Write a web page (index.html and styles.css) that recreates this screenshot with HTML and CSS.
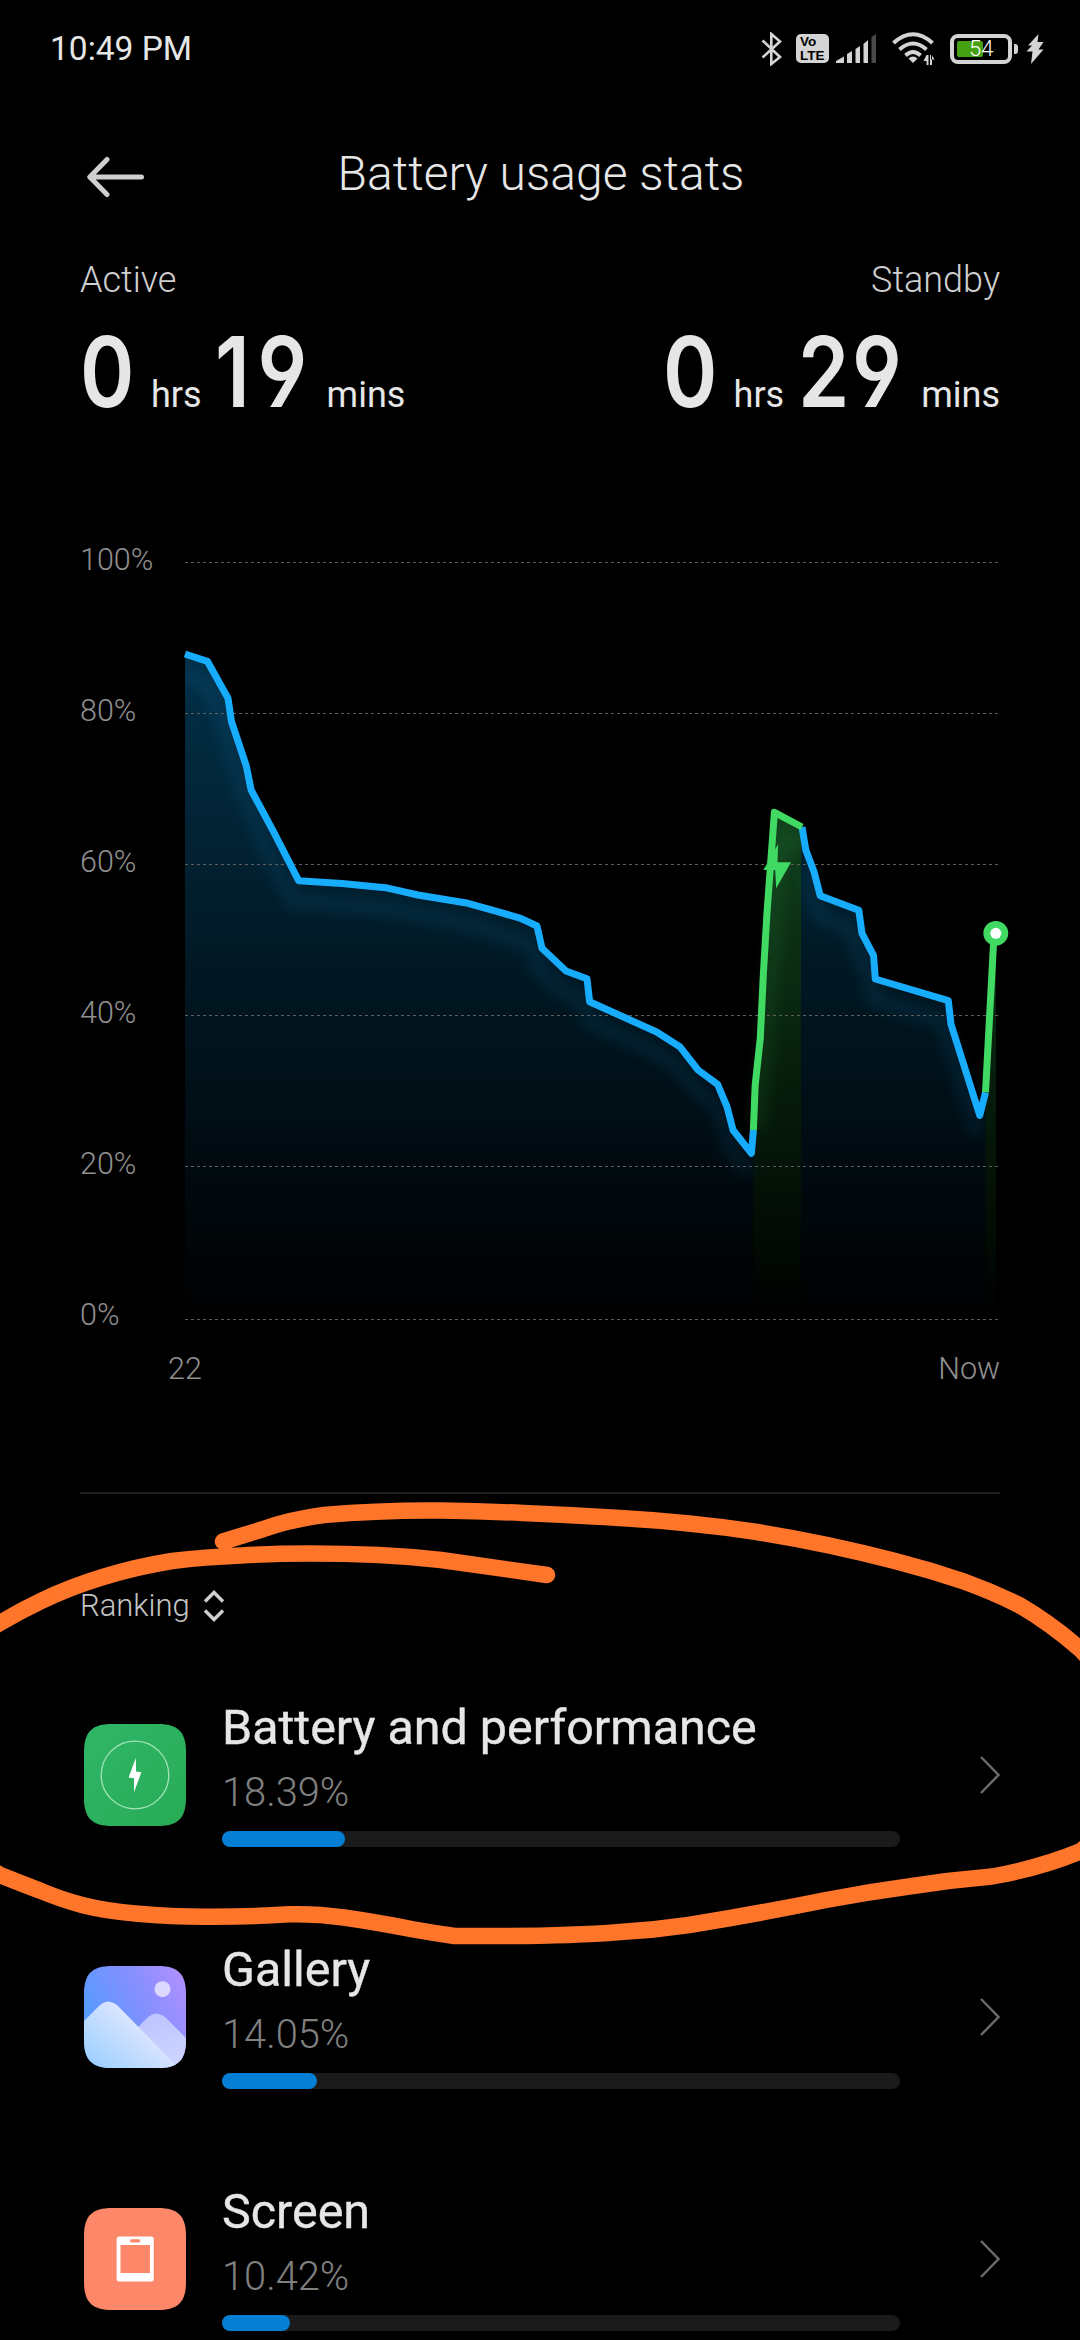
FILE: index.html
```html
<!DOCTYPE html>
<html lang="en">

<head>
    <meta charset="utf-8">
    <title>Battery usage stats</title>
    <link rel="stylesheet" href="styles.css">
</head>

<body>
    <div class="screen">
        <div class="status-bar">
            <span class="time">10:49 PM</span>
            <div class="status-icons">
                <svg class="bluetooth" width="21" height="34" viewBox="0 0 21 34">
                    <path d="M1.5 8.5 L19 25 L10.3 32 V2 L19 9.5 L1.5 25.5" />
                </svg>
                <div class="volte"><span>Vo</span><span>LTE</span></div>
                <svg class="signal" width="41" height="30" viewBox="0 0 41 30">
                    <path d="M0 29 V27 L8 22.5 V29 Z M11 29 V20 L16 17 V29 Z M19.500 29 V15 L24 12 V29 Z M27.500 29 V10 L32 6 V29 Z" />
                    <path class="off" d="M35.500 29 V3 L40 0 V29 Z" />
                </svg>
                <svg class="wifi" width="43" height="34" viewBox="0 0 43 34">
                    <path class="arc" d="M1.500 11 Q21 -6.500 40.500 11 M7.500 17.500 Q21 5.500 34.500 17.500 M13.500 23.500 Q21 16.500 28.500 23.500" />
                    <path d="M16.500 26.500 Q21 22.500 25.500 26.500 L21 31 Z" />
                    <path d="M34.500 23 h2 v10 h-2 v-4 h-3 Z M38 33 v-10 l1 0 v4.500 h3.500 l-2.500 -4 v9.500 Z" />
                </svg>
                <div class="battery">
                    <div class="battery-fill"></div>
                    <span class="battery-level">54</span>
                </div>
                <div class="battery-nub"></div>
                <svg class="charge" width="18" height="30" viewBox="0 0 18 30">
                    <path d="M12.500 0 L2 11.500 H6 L0.500 17.500 H6.500 L5 30 L17.500 15.500 H12.500 L17.500 8 H11.500 Z" />
                </svg>
            </div>
        </div>

        <div class="header">
            <svg class="back" width="58" height="42" viewBox="0 0 58 42">
                <path d="M54.500 21 H3 M20 3.500 L2.800 21 L20 38.500" />
            </svg>
            <h1>Battery usage stats</h1>
        </div>

        <div class="summary">
            <div class="stat">
                <div class="stat-label">Active</div>
                <div class="stat-value">
                    <span class="num hours">0</span><span class="unit">hrs</span><span class="num active-mins">19</span><span class="unit">mins</span>
                </div>
            </div>
            <div class="stat stat-right">
                <div class="stat-label">Standby</div>
                <div class="stat-value">
                    <span class="num hours">0</span><span class="unit">hrs</span><span class="num standby-mins">29</span><span class="unit">mins</span>
                </div>
            </div>
        </div>

        <div class="chart">
            <div class="y-axis">
                <span>100%</span>
                <span>80%</span>
                <span>60%</span>
                <span>40%</span>
                <span>20%</span>
                <span>0%</span>
            </div>
            <svg class="plot" width="815" height="790" viewBox="185 540 815 790">
                <defs>
                    <linearGradient id="blueFill" gradientUnits="userSpaceOnUse" x1="0" y1="650" x2="0" y2="1318">
                        <stop offset="0" stop-color="#033049" />
                        <stop offset="0.5" stop-color="#011722" />
                        <stop offset="1" stop-color="#000001" />
                    </linearGradient>
                    <linearGradient id="greenFill" gradientUnits="userSpaceOnUse" x1="0" y1="812" x2="0" y2="1318">
                        <stop offset="0" stop-color="#113f1c" />
                        <stop offset="0.5" stop-color="#071f0c" />
                        <stop offset="1" stop-color="#000100" />
                    </linearGradient>
                    <filter id="glow" filterUnits="userSpaceOnUse" x="150" y="600" width="900" height="720">
                        <feGaussianBlur stdDeviation="7" />
                    </filter>
                    <clipPath id="plotClip">
                        <rect x="185" y="540" width="811" height="790" />
                    </clipPath>
                </defs>

                <path fill="url(#blueFill)" d="M185 654 L207.400 661.300 L228 698.300 L231.500 721.700 L246.300 766 L251.100 790 L273.500 831.700 L298.600 880.700 L342 883.600 L385.400 887.700 L418 895 L468 903.300 L494 910.700 L520.700 918.300 L537 926 L542 948.300 L566 971 L587 978.700 L589.600 1001.700 L656.700 1032 L679.800 1046.700 L698 1070 L717.600 1084.300 L727 1106.700 L733 1130 L751.400 1153.300 L753.400 1130 V1318 H185 Z" />
                <path fill="url(#blueFill)" d="M801 827 L805.800 850 L814 871.700 L820.200 895.700 L858.800 910.300 L862 933.300 L873.600 955.700 L875.300 979 L948.300 1000.700 L951 1024.300 L979.700 1115.300 L985.500 1092.300 V1318 H801 Z" />
                <path fill="url(#greenFill)" d="M753.400 1130 L755.200 1085 L760.300 1038 L763.400 973.300 L774.400 812.300 L801 827 V1318 H753.400 Z" />
                <path fill="url(#greenFill)" d="M985.500 1092.300 L996 933.300 V1318 H985.500 Z" />

                <g clip-path="url(#plotClip)">
                    <path class="shade blue" filter="url(#glow)" d="M185 674 L205 683 L222 718 L240 786 L268 852 L293 901 L385 908 L468 924 L530 944 L540 970 L562 991 L584 1000 L590 1022 L655 1052 L678 1067 L696 1090 L715 1105 L725 1127 L731 1150 L750 1172" />
                    <path class="shade blue" filter="url(#glow)" d="M806 872 L818 916 L853 930 L860 955 L870 977 L874 1000 L943 1021 L950 1044 L978 1134" />
                    <path class="shade green" filter="url(#glow)" d="M757 1130 L766 1038 L781 834 L801 846" />
                </g>

                <g class="grid">
                    <path d="M185 562.500 H999" />
                    <path d="M185 713.500 H999" />
                    <path d="M185 864.500 H999" />
                    <path d="M185 1015.500 H999" />
                    <path d="M185 1166.500 H999" />
                    <path d="M185 1319.500 H999" />
                </g>

                <path class="line blue" d="M185 654 L207.400 661.300 L228 698.300 L231.500 721.700 L246.300 766 L251.100 790 L273.500 831.700 L298.600 880.700 L342 883.600 L385.400 887.700 L418 895 L468 903.300 L494 910.700 L520.700 918.300 L537 926 L542 948.300 L566 971 L587 978.700 L589.600 1001.700 L656.700 1032 L679.800 1046.700 L698 1070 L717.600 1084.300 L727 1106.700 L733 1130 L751.400 1153.300 L753.400 1130" />
                <path class="line blue" d="M802 827 L805.800 850 L814 871.700 L820.200 895.700 L858.800 910.300 L862 933.300 L873.600 955.700 L875.300 979 L948.300 1000.700 L951 1024.300 L979.700 1115.300 L985.500 1092.300" />
                <path class="line green" d="M753.400 1130 L755.200 1085 L760.300 1038 L763.400 973.300 L767 913 L774.400 812.300 L802 827" />
                <path class="line green" d="M985.500 1092.300 L993.500 944" />
                <path class="bolt" d="M778.200 844 L777.500 862.300 H791 L776.200 888.300 L775.200 870 H763.400 Z" />
                <circle class="now-ring" cx="995.800" cy="933.300" r="12.400" />
                <circle class="now-dot" cx="995.800" cy="933.300" r="5.500" />
            </svg>
        </div>
        <div class="x-axis">
            <span>22</span>
            <span>Now</span>
        </div>

        <div class="divider"></div>

        <div class="ranking">
            <span>Ranking</span>
            <svg width="22" height="32" viewBox="0 0 22 32">
                <path d="M2 11.500 L11 2.500 L20 11.500 M2 20.500 L11 29.500 L20 20.500" />
            </svg>
        </div>

        <div class="app-list">
            <div class="app">
                <svg class="app-icon" width="102" height="102" viewBox="0 0 102 102">
                    <defs>
                        <linearGradient id="batteryBg" x1="0" y1="0" x2="1" y2="1">
                            <stop offset="0" stop-color="#30b668" />
                            <stop offset="1" stop-color="#28ab55" />
                        </linearGradient>
                    </defs>
                    <path fill="url(#batteryBg)" d="M28 0 H74 C94 0 102 8 102 28 V74 C102 94 94 102 74 102 H28 C8 102 0 94 0 74 V28 C0 8 8 0 28 0 Z" />
                    <circle cx="51" cy="51" r="33.800" fill="none" stroke="#a4e5ba" stroke-width="1.300" />
                    <path fill="#fff" d="M51.800 34 L44.600 53.600 L50 54.300 L50 68.200 L57.400 48.300 L52 47.600 Z" />
                </svg>
                <div class="app-body">
                    <div class="app-name">Battery and performance</div>
                    <div class="app-percent">18.39%</div>
                    <div class="bar">
                        <div class="bar-fill" style="width: 18.2%"></div>
                    </div>
                </div>
                <svg class="chevron" width="22" height="40" viewBox="0 0 22 40">
                    <path d="M2 2 L19.500 20 L2 38" />
                </svg>
            </div>

            <div class="app">
                <svg class="app-icon" width="102" height="102" viewBox="0 0 102 102">
                    <defs>
                        <linearGradient id="sky" x1="0" y1="0.600" x2="1" y2="0.100">
                            <stop offset="0" stop-color="#4f9dff" />
                            <stop offset="0.500" stop-color="#7f90ff" />
                            <stop offset="1" stop-color="#b18fff" />
                        </linearGradient>
                        <linearGradient id="hillFront" x1="0" y1="1" x2="0.700" y2="0.400">
                            <stop offset="0" stop-color="#92cdff" />
                            <stop offset="1" stop-color="#dde5ff" />
                        </linearGradient>
                        <linearGradient id="hillBack" x1="0" y1="0" x2="0.400" y2="1">
                            <stop offset="0" stop-color="#b9c0ff" />
                            <stop offset="1" stop-color="#ccd3ff" />
                        </linearGradient>
                        <clipPath id="iconClip">
                            <path d="M28 0 H74 C94 0 102 8 102 28 V74 C102 94 94 102 74 102 H28 C8 102 0 94 0 74 V28 C0 8 8 0 28 0 Z" />
                        </clipPath>
                    </defs>
                    <g clip-path="url(#iconClip)">
                        <rect width="102" height="102" fill="url(#sky)" />
                        <circle cx="78.500" cy="23.200" r="8" fill="#dcd8ff" />
                        <path fill="url(#hillBack)" d="M20 96 L64 51 Q72 44 81 51 L104 74 V104 H20 Z" />
                        <path fill="url(#hillFront)" d="M-2 57 L16 39 Q24 32 33 39 L92 99 V104 H-2 Z" />
                    </g>
                </svg>
                <div class="app-body">
                    <div class="app-name">Gallery</div>
                    <div class="app-percent">14.05%</div>
                    <div class="bar">
                        <div class="bar-fill" style="width: 14.05%"></div>
                    </div>
                </div>
                <svg class="chevron" width="22" height="40" viewBox="0 0 22 40">
                    <path d="M2 2 L19.500 20 L2 38" />
                </svg>
            </div>

            <div class="app">
                <svg class="app-icon" width="102" height="102" viewBox="0 0 102 102">
                    <path fill="#fc8769" d="M28 0 H74 C94 0 102 8 102 28 V74 C102 94 94 102 74 102 H28 C8 102 0 94 0 74 V28 C0 8 8 0 28 0 Z" />
                    <rect x="32.600" y="28.500" width="37.200" height="45" rx="2.500" fill="#fff" />
                    <rect x="36.500" y="37" width="29.500" height="28" fill="#fc8769" />
                    <rect x="46" y="31.300" width="10.300" height="3.200" rx="1.600" fill="#fc8769" />
                </svg>
                <div class="app-body">
                    <div class="app-name">Screen</div>
                    <div class="app-percent">10.42%</div>
                    <div class="bar">
                        <div class="bar-fill" style="width: 10.1%"></div>
                    </div>
                </div>
                <svg class="chevron" width="22" height="40" viewBox="0 0 22 40">
                    <path d="M2 2 L19.500 20 L2 38" />
                </svg>
            </div>
        </div>

        <!-- hand drawn marker around the first app -->
        <svg class="marker" width="1080" height="480" viewBox="0 1480 1080 480">
            <path d="M223 1541.500 L262 1529.500 Q290 1519.500 324 1515 Q380 1510 441 1510.500 Q482 1511 523 1513 Q572 1515 620 1518 Q655 1520 689 1523.500 Q724 1527 757 1532 Q826 1543 895 1561 Q930 1570 964 1581.500 Q993 1592 1019 1605 Q1050 1623 1080 1649 Q1130 1700 1125 1780 Q1115 1825 1080 1851.500 Q1040 1868 992 1876.500 Q950 1880 909 1886.500 Q868 1892 826 1900 Q757 1914 689 1925 Q655 1930 620 1932 Q570 1936 500 1936 L454.500 1936 Q434 1933 413 1929.300 Q375 1922 344 1917.500 Q316 1913.500 289 1914.300 Q245 1917 206 1916.700 Q170 1916.500 138 1913.700 Q105 1911 82 1905 Q60 1899 41 1891 Q20 1883 0 1875 Q-60 1840 -60 1750 Q-50 1650 0 1623 Q20 1611 41 1601 Q70 1587 103 1577 Q135 1567 172 1561 Q205 1557 241 1555.500 Q275 1553.500 310 1553.500 Q345 1553.500 379 1555 Q410 1556.500 441 1560 L547 1575" />
        </svg>
    </div>
</body>

</html>
```
FILE: styles.css
```css
* {
    box-sizing: border-box;
}

body {
    margin: 0;
    background-color: #000;
    color: #e6e6e6;
    font-family: Roboto, sans-serif;
}

svg {
    display: block;
    flex-shrink: 0;
}

.screen {
    position: relative;
    width: 1080px;
    height: 2340px;
    overflow: hidden;
}

/* status bar */
.status-bar {
    display: flex;
    justify-content: space-between;
    align-items: center;
    height: 97px;
    padding: 0 36px 0 50px;
}

.time {
    font-size: 33.5px;
    line-height: 40px;
    padding-top: 1px;
}

.status-icons {
    display: flex;
    align-items: center;
    fill: #d4d4d4;
}

.bluetooth path {
    fill: none;
    stroke: #d4d4d4;
    stroke-width: 2.6;
}

.volte {
    display: flex;
    flex-direction: column;
    width: 33px;
    height: 29px;
    margin-left: 14px;
    padding: 1px 0 0 4px;
    border-radius: 5px;
    background-color: #d4d4d4;
    color: #000;
    font-family: "Liberation Sans", sans-serif;
    font-size: 13.5px;
    font-weight: 700;
    line-height: 13.5px;
}

.signal {
    margin-left: 7px;
}

.signal .off {
    fill: #4a4a4a;
}

.wifi {
    margin-left: 15px;
}

.wifi .arc {
    fill: none;
    stroke: #d4d4d4;
    stroke-width: 4;
}

.battery {
    display: flex;
    align-items: center;
    width: 62px;
    height: 30px;
    margin-left: 15px;
    padding-left: 3px;
    border: 4px solid #d4d4d4;
    border-radius: 8px;
}

.battery-fill {
    width: 26px;
    height: 16px;
    border-radius: 2px;
    background-color: #45a012;
}

.battery-level {
    margin-left: -14px;
    color: #fff;
    font-size: 22px;
    font-weight: 300;
    line-height: 22px;
}

.battery-nub {
    width: 4px;
    height: 10px;
    margin-left: 2px;
    border-radius: 0 3px 3px 0;
    background-color: #d4d4d4;
}

.charge {
    margin-left: 8px;
}

/* header */
.header {
    display: grid;
    grid-template-columns: 58px 1fr 58px;
    align-items: center;
    height: 154px;
    padding: 0 86px;
}

.back {
    margin: 5px 0 0 1px;
    fill: none;
    stroke: #cfcfcf;
    stroke-width: 5;
    stroke-linecap: round;
    stroke-linejoin: round;
}

h1 {
    margin: 0 -1px 0 1px;
    font-size: 48px;
    font-weight: 300;
    line-height: 56px;
    text-align: center;
}

/* active / standby */
.summary {
    display: flex;
    justify-content: space-between;
    padding: 7px 80px 0;
}

.stat-label {
    color: #cfcfcf;
    font-size: 36px;
    font-weight: 300;
    line-height: 44px;
}

.stat-right .stat-label {
    text-align: right;
}

.stat-value {
    display: flex;
    align-items: baseline;
    height: 99px;
    margin-top: 20px;
}

/* narrow digits */
.num {
    font-family: Inter, sans-serif;
    font-feature-settings: "ss01";
    font-size: 97px;
    font-weight: 600;
    line-height: 100px;
    transform: scaleX(0.85);
    transform-origin: left;
}

.hours {
    width: 71px;
}

.active-mins {
    width: 112px;
    margin-left: 13px;
    letter-spacing: 9px;
}

.standby-mins {
    width: 123px;
    margin-left: 14px;
    letter-spacing: 3px;
}

.unit {
    font-size: 36px;
    line-height: 44px;
}

/* chart */
.chart {
    display: flex;
    margin-top: 119px;
    padding: 0 80px;
}

.y-axis {
    display: flex;
    flex-direction: column;
    gap: 111px;
    width: 105px;
    color: #909090;
    font-size: 30.5px;
    font-weight: 300;
    line-height: 40px;
}

.plot {
    overflow: visible;
}

.grid path {
    stroke: #5e5e5e;
    stroke-width: 1;
    stroke-dasharray: 3 3;
}

.line {
    fill: none;
    stroke-width: 7;
    stroke-linejoin: round;
}

.blue {
    stroke: #18acfd;
}

.green {
    stroke: #40da62;
}

.shade {
    fill: none;
    stroke-width: 14;
    opacity: 0.1;
}

.bolt,
.now-ring {
    fill: #40da62;
}

.now-dot {
    fill: #fff;
}

.x-axis {
    display: flex;
    justify-content: space-between;
    margin-top: 14px;
    padding: 0 80px 0 168px;
    color: #909090;
    font-size: 30.5px;
    font-weight: 300;
    line-height: 40px;
}

.divider {
    height: 2px;
    margin: 103px 80px 0;
    background-color: #1e1e1e;
}

/* ranking */
.ranking {
    display: flex;
    align-items: center;
    gap: 13px;
    margin-top: 92px;
    padding-left: 80px;
    color: #c4c4c4;
    font-size: 31px;
    font-weight: 300;
    line-height: 40px;
}

.ranking path {
    fill: none;
    stroke: #cfcfcf;
    stroke-width: 3.4;
}

.app-list {
    margin-top: 28px;
}

.app {
    display: flex;
    align-items: center;
    height: 242px;
    padding: 0 79px 0 84px;
}

.app-body {
    width: 678px;
    height: 151px;
    margin-left: 36px;
}

.app-name {
    font-size: 48.4px;
    line-height: 56px;
    -webkit-text-stroke: 0.4px #e6e6e6;
}

.app-percent {
    margin-top: 13px;
    color: #808080;
    font-size: 39.8px;
    font-weight: 300;
    line-height: 48px;
}

.bar {
    height: 16px;
    margin-top: 14px;
    border-radius: 8px;
    background-color: #1a1a1a;
}

.bar-fill {
    height: 100%;
    border-radius: 8px;
    background-color: #057fd4;
}

.chevron {
    margin-left: auto;
    fill: none;
    stroke: #6a6a6a;
    stroke-width: 2.5;
}

/* marker lies over the page */
.marker {
    position: absolute;
    top: 1480px;
    left: 0;
    fill: none;
    stroke: #ff762a;
    stroke-width: 16.5;
    stroke-linecap: round;
    stroke-linejoin: round;
}
```
